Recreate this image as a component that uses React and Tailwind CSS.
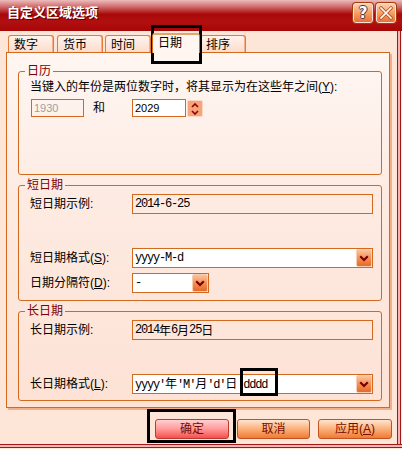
import React from "react";

const ORANGE = "border-[#d2691e]";

function monoText(str) {
  return Array.from(str).map((ch, i) =>
    ch.charCodeAt(0) > 0x2e80 ? (
      <span key={i} className="tracking-[0px] font-['Noto_Sans_CJK_SC',sans-serif]">
        {ch}
      </span>
    ) : (
      <span key={i}>{ch}</span>
    )
  );
}

function Chevron() {
  return (
    <svg width="10" height="7" viewBox="0 0 10 7">
      <path d="M1.2 1.2 L5 5 L8.8 1.2" fill="none" stroke="#7a0000" strokeWidth="2.2" />
    </svg>
  );
}

function DropBtn() {
  return (
    <div className="w-[16px] h-[18px] shrink-0 flex items-center justify-center rounded-[2px] border border-[#f9cdb0] bg-[linear-gradient(180deg,#fcc49e_0%,#f48c50_55%,#e56a2a_100%)]">
      <Chevron />
    </div>
  );
}

function Field({ children }) {
  return (
    <div
      className={`w-[241px] h-[20px] border ${ORANGE} flex items-center pl-[2px] font-['Liberation_Mono','Noto_Sans_CJK_SC',monospace] text-[12px] tracking-[-1.2px]`}
    >
      {children}
    </div>
  );
}

function Combo({ wide, children }) {
  return (
    <div
      className={`${wide ? "w-[241px]" : "w-[77px]"} h-[20px] border ${ORANGE} bg-white flex items-center`}
    >
      <div className="flex-1 pl-[2px] font-['Liberation_Mono','Noto_Sans_CJK_SC',monospace] text-[12px] tracking-[-1.2px] whitespace-nowrap overflow-hidden">
        {children}
      </div>
      <DropBtn />
    </div>
  );
}

function Tab({ label, cls, selected }) {
  if (selected) {
    return (
      <div
        className={`${cls} relative z-10 h-[20px] -mb-[1px] border border-b-0 ${ORANGE} border-t-2 border-t-[#e2a66a] rounded-t-[3px] bg-[#fff5f1] pl-[5px] pt-[1px] leading-[14px]`}
      >
        {label}
      </div>
    );
  }
  return (
    <div
      className={`${cls} h-[17px] border border-b-0 border-[#e57a3a] rounded-t-[3px] bg-[linear-gradient(180deg,#fff3ec,#fcdccb)] pl-[5px] pt-[2px] leading-[14px] shadow-[inset_-1px_0_0_#f3b08a]`}
    >
      {label}
    </div>
  );
}

function Legend({ children }) {
  return (
    <legend className="ml-[6px] px-[2px] text-[#800000] text-[12px] leading-[14px]">
      {children}
    </legend>
  );
}

function Button({ w, red, children }) {
  return (
    <div
      className={`${w} h-[20px] rounded-[3px] border flex items-center justify-center text-[#7a0a00] text-[12px] leading-[14px] ${
        red
          ? "border-[#c0392b] bg-[linear-gradient(180deg,#ffd0d0_0%,#ff9a9a_50%,#f4504c_100%)]"
          : "border-[#c0531e] bg-[linear-gradient(180deg,#ffe4cf_0%,#fbb07a_50%,#f07a34_100%)]"
      }`}
    >
      {children}
    </div>
  );
}

export default function App() {
  return (
    <div className="relative w-[402px] h-[449px] overflow-hidden bg-[#fde5d8] flex flex-col font-['Liberation_Sans','Noto_Sans_CJK_SC',sans-serif] text-[12px] text-black">
      {/* Title bar */}
      <div className="h-[31px] shrink-0 flex items-start justify-between pl-[7px] pr-[6px] bg-[linear-gradient(180deg,#ecbcbc_0%,#d06a6a_22%,#a80808_46%,#b21010_70%,#a60606_100%)]">
        <div className="mt-[5px] text-white font-bold text-[13px] leading-[16px] [text-shadow:1px_1px_0_#5a0000]">
          自定义区域选项
        </div>
        <div className="flex gap-[3px] mt-[3px]">
          <div className="w-[20px] h-[20px] rounded-[3px] border border-[#fbe2d0] shadow-[0_0_0_1px_#a83a10] bg-[linear-gradient(180deg,#fcd0ae_0%,#f49458_60%,#e8703a_100%)] flex items-center justify-center text-white font-bold text-[15px] leading-[16px] font-['DejaVu_Sans',sans-serif] [text-shadow:1px_0_0_#3c3c5a,-1px_0_0_#3c3c5a,0_1px_0_#3c3c5a,0_-1px_0_#3c3c5a]">
            ?
          </div>
          <div className="w-[20px] h-[20px] rounded-[3px] border border-[#fbe2d0] shadow-[0_0_0_1px_#a83a10] bg-[linear-gradient(180deg,#fcd0ae_0%,#f49458_60%,#e8703a_100%)] flex items-center justify-center">
            <svg width="14" height="14" viewBox="0 0 14 14">
              <path d="M2 2 L12 12 M12 2 L2 12" stroke="#b4501e" strokeWidth="3.2" strokeLinecap="square" />
              <path d="M2 2 L12 12 M12 2 L2 12" stroke="#ffffff" strokeWidth="1.6" strokeLinecap="square" />
            </svg>
          </div>
        </div>
      </div>

      {/* Body */}
      <div className="flex flex-1 min-h-0">
        <div className="w-[397px] flex flex-col">
          {/* Tabs */}
          <div className="mt-[2px] h-[19px] flex items-end">
            <Tab label="数字" cls="ml-[8px] w-[46px]" />
            <Tab label="货币" cls="ml-[3px] w-[46px]" />
            <Tab label="时间" cls="ml-[2px] w-[46px]" />
            <Tab label="日期" cls="ml-[1px] w-[48px]" selected />
            <Tab label="排序" cls="w-[46px]" />
          </div>

          {/* Panel */}
          <div
            className={`ml-[6px] w-[384px] h-[356px] border ${ORANGE} shadow-[2px_2px_0_#f5ae85] bg-[linear-gradient(180deg,#fff6f2_0%,#fdeae1_45%,#fde2d5_100%)] pt-[11px] pl-[11px] pr-[7px] flex flex-col gap-[3px]`}
          >
            {/* 日历 */}
            <fieldset className={`h-[111px] border ${ORANGE} rounded-[3px]`}>
              <Legend>日历</Legend>
              <div className="pl-[11px]">
                <div className="mt-[2px] leading-[14px] whitespace-nowrap">
                  当键入的年份是两位数字时，将其显示为在这些年之间(<span className="underline">Y</span>):
                </div>
                <div className="mt-[5px] flex items-start h-[18px]">
                  <div className={`ml-[1px] w-[53px] h-[18px] border ${ORANGE} flex items-center pl-[2px] text-[11px] text-[#a0a0a0]`}>
                    1930
                  </div>
                  <div className="ml-[9px] w-[39px] leading-[18px]">和</div>
                  <div className={`w-[54px] h-[18px] border ${ORANGE} bg-white flex items-center pl-[2px] text-[11px]`}>
                    2029
                  </div>
                  <div className="ml-[1px] mt-[1px] w-[16px] h-[17px] rounded-[2px] border border-[#fbd8c0] bg-[#f7a47a] flex flex-col items-center justify-center gap-[2px]">
                    <svg width="8" height="5" viewBox="0 0 8 5">
                      <path d="M1 4 L4 1 L7 4" fill="none" stroke="#8a0000" strokeWidth="1.6" />
                    </svg>
                    <svg width="8" height="5" viewBox="0 0 8 5">
                      <path d="M1 1 L4 4 L7 1" fill="none" stroke="#8a0000" strokeWidth="1.6" />
                    </svg>
                  </div>
                </div>
              </div>
            </fieldset>

            {/* 短日期 */}
            <fieldset className={`h-[123px] border ${ORANGE} rounded-[3px]`}>
              <Legend>短日期</Legend>
              <div className="pl-[11px]">
                <div className="mt-[2px] flex items-center h-[20px]">
                  <span className="w-[102px] leading-[14px]">短日期示例:</span>
                  <Field>{monoText("2014-6-25")}</Field>
                </div>
                <div className="mt-[34px] flex items-center h-[20px]">
                  <span className="w-[102px] leading-[14px]">
                    短日期格式(<span className="underline">S</span>):
                  </span>
                  <Combo wide>{monoText("yyyy-M-d")}</Combo>
                </div>
                <div className="mt-[5px] flex items-center h-[20px]">
                  <span className="w-[102px] leading-[14px]">
                    日期分隔符(<span className="underline">D</span>):
                  </span>
                  <Combo>{monoText("-")}</Combo>
                </div>
              </div>
            </fieldset>

            {/* 长日期 */}
            <fieldset className={`h-[97px] border ${ORANGE} rounded-[3px]`}>
              <Legend>长日期</Legend>
              <div className="pl-[11px]">
                <div className="mt-[2px] flex items-center h-[20px]">
                  <span className="w-[102px] leading-[14px]">长日期示例:</span>
                  <Field>{monoText("2014年6月25日")}</Field>
                </div>
                <div className="mt-[34px] flex items-center h-[20px]">
                  <span className="w-[102px] leading-[14px]">
                    长日期格式(<span className="underline">L</span>):
                  </span>
                  <Combo wide>{monoText("yyyy'年'M'月'd'日'dddd")}</Combo>
                </div>
              </div>
            </fieldset>
          </div>

          {/* Buttons */}
          <div className="mt-[11px] flex justify-end gap-[8px] pr-[5px]">
            <Button w="w-[74px]" red>确定</Button>
            <Button w="w-[73px]">取消</Button>
            <Button w="w-[74px]">
              应用(<span className="underline">A</span>)
            </Button>
          </div>
        </div>
        <div className="w-[4px] border-l border-r border-[#a01818] bg-[#f2b4b4]" />
        <div className="w-[1px]" />
      </div>
      <div className="h-[5px] shrink-0">
        <div className="h-[4px] border-t border-b border-[#a01818] bg-[#f2b4b4]" />
      </div>

      {/* Annotation boxes */}
      <div className="absolute left-[151px] top-[25px] w-[51px] h-[39px] border-[3px] border-black" />
      <div className="absolute left-[240px] top-[368px] w-[38px] h-[28px] border-[3px] border-black" />
      <div className="absolute left-[147px] top-[409px] w-[89px] h-[34px] border-[3px] border-black" />
    </div>
  );
}
